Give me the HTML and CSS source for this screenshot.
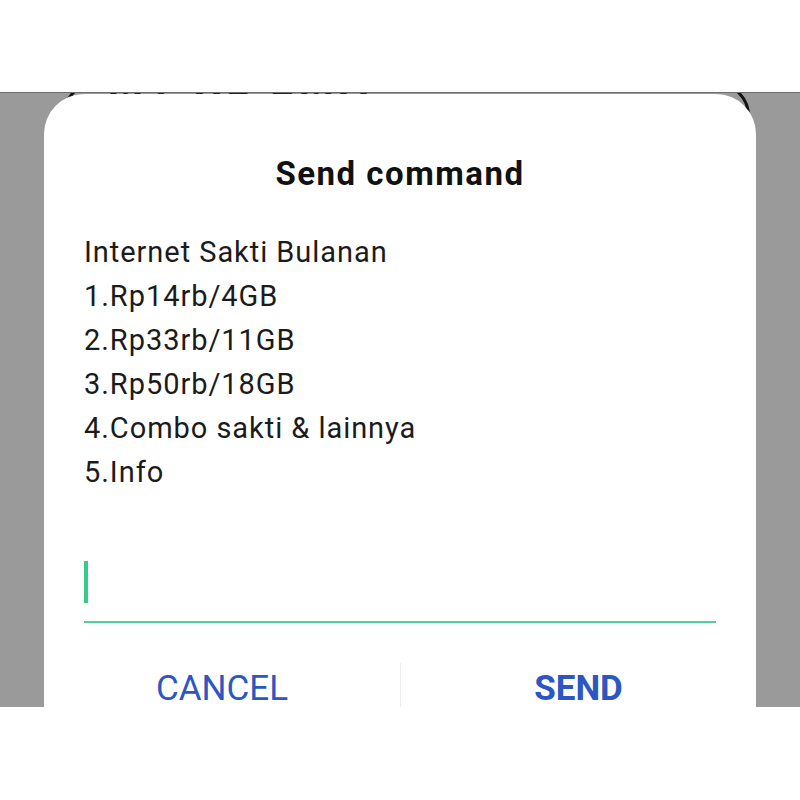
FILE: index.html
```html
<!DOCTYPE html>
<html>
<head>
<meta charset="utf-8">
<link rel="stylesheet" href="styles.css">
</head>
<body>
<div class="screen">
  <div class="backcard"></div>
  <div class="backtext"><span>MY XL EMA TERM</span></div>
  <div class="dialog">
    <h1 class="title">Send command</h1>
    <div class="message">
      <div>Internet Sakti Bulanan</div>
      <div>1.Rp14rb/4GB</div>
      <div>2.Rp33rb/11GB</div>
      <div>3.Rp50rb/18GB</div>
      <div>4.Combo sakti &amp; lainnya</div>
      <div>5.Info</div>
    </div>
    <div class="input"><span class="cursor"></span></div>
    <div class="buttons">
      <div class="btn cancel">CANCEL</div>
      <div class="btn send">SEND</div>
    </div>
  </div>
</div>
</body>
</html>
```
FILE: styles.css
```css
html, body {
  margin: 0;
  padding: 0;
  background: #ffffff;
}
body {
  font-family: Roboto, "Liberation Sans", sans-serif;
}
.screen {
  position: relative;
  margin-top: 92px;
  height: 615px;
  box-sizing: border-box;
  border-top: 1px solid #6e6e6e;
  background: #9a9a9a;
  padding: 1px 44px 0;
  overflow: hidden;
  display: flex;
  flex-direction: column;
}
.backcard {
  position: absolute;
  left: 62px;
  right: 50px;
  top: -11px;
  height: 200px;
  border: 3px solid #111;
  border-radius: 34px;
  z-index: 0;
}
.backtext {
  position: absolute;
  left: 108px;
  top: 0;
  height: 2px;
  width: 320px;
  overflow: hidden;
  z-index: 0;
}
.backtext span {
  display: block;
  font-size: 40px;
  font-weight: 700;
  line-height: 40px;
  margin-top: -32px;
  color: #222;
  letter-spacing: 6px;
}
.dialog {
  position: relative;
  z-index: 1;
  flex: 1;
  background: #ffffff;
  border-radius: 40px 40px 0 0;
  padding: 60px 40px 0;
  display: flex;
  flex-direction: column;
}
.title {
  margin: 0;
  font-size: 33px;
  line-height: 40px;
  font-weight: 700;
  text-align: center;
  color: #111;
  letter-spacing: 1.5px;
}
.message {
  margin-top: 36px;
  font-size: 29px;
  line-height: 44px;
  color: #1b1b1b;
  letter-spacing: 0.95px;
}
.input {
  margin-top: 59px;
  padding: 8px 0 18px;
  border-bottom: 2px solid #4fd09e;
  display: flex;
}
.cursor {
  width: 4px;
  height: 42px;
  background: #34cc8a;
}
.buttons {
  margin: 40px -40px 0;
  display: grid;
  grid-template-columns: 1fr 1fr;
}
.btn {
  font-size: 35px;
  line-height: 52px;
  text-align: center;
  color: #2c57c2;
}
.send {
  font-weight: 700;
  border-left: 1px solid #eeeeee;
}
```
